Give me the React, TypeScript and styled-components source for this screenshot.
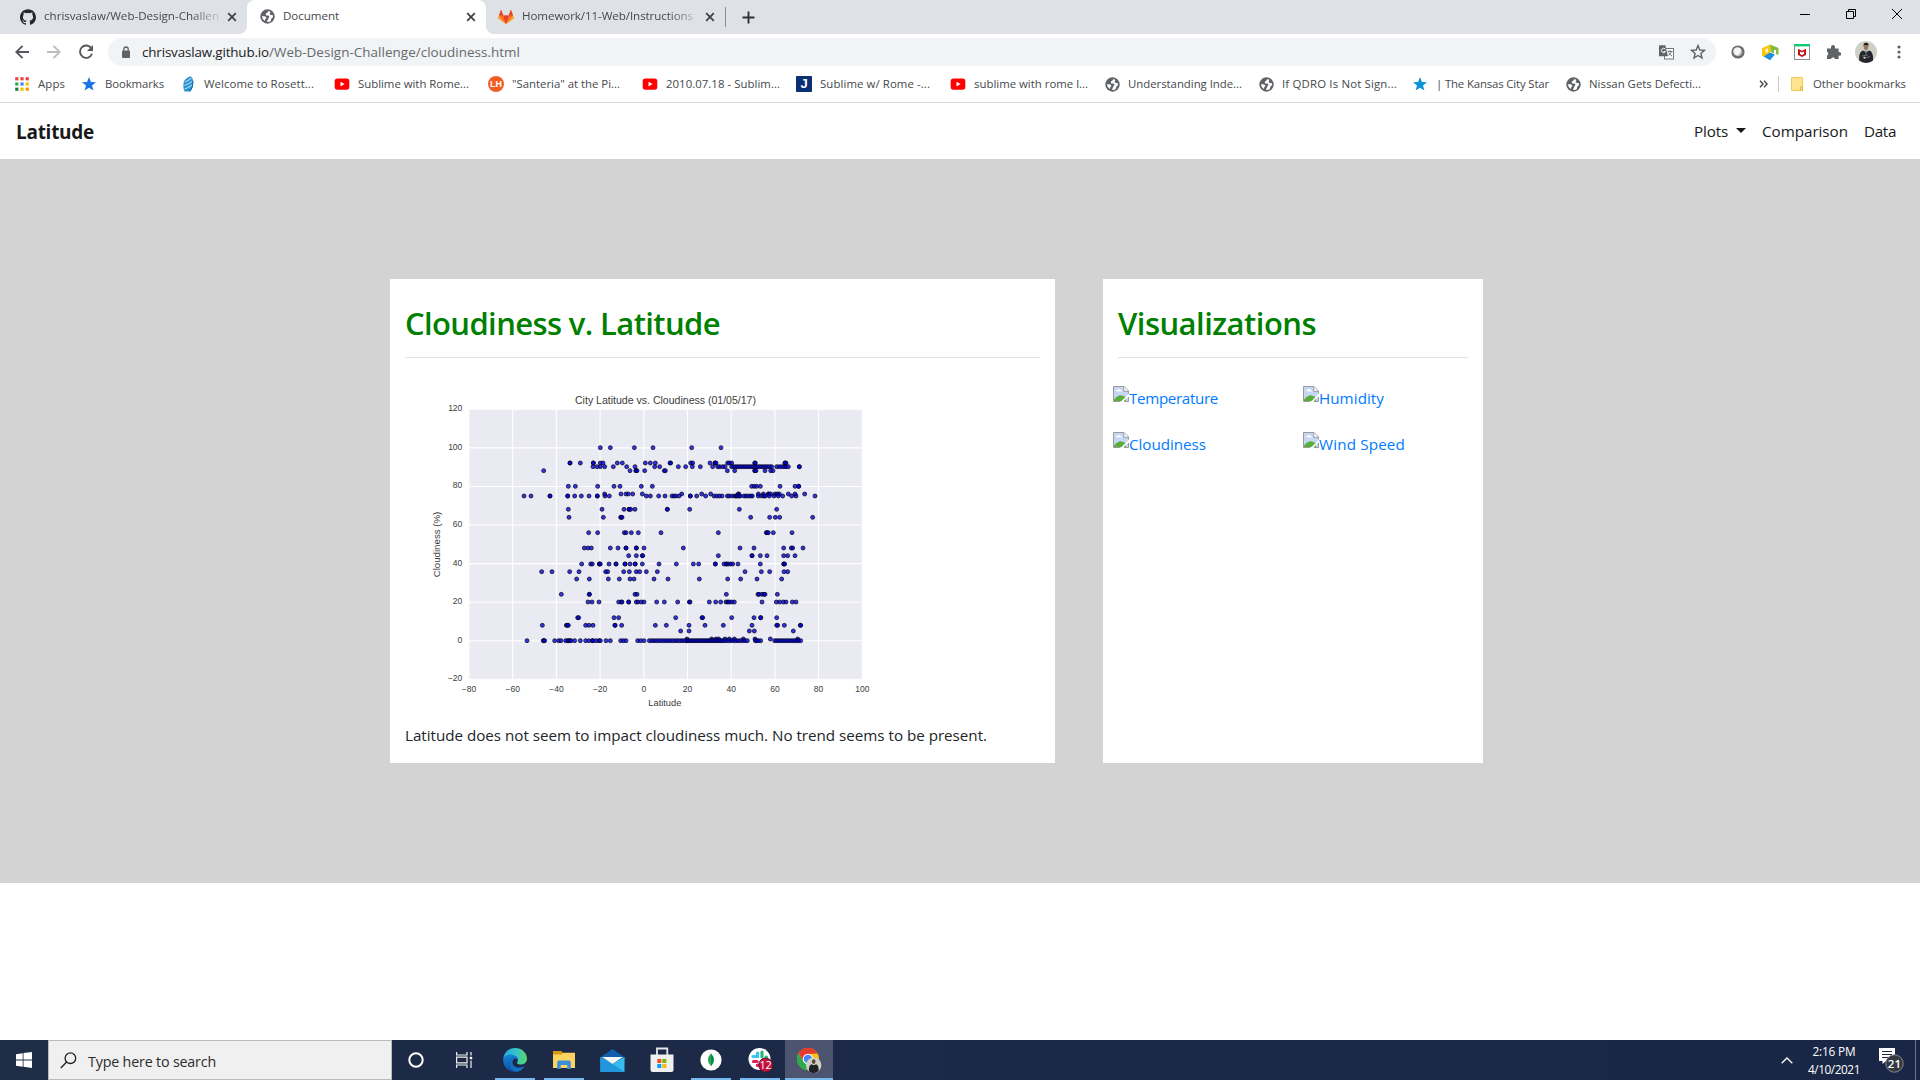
import React, { useLayoutEffect, useRef, useState } from "react";
import styled, { createGlobalStyle } from "styled-components";
import { SiGithub } from "react-icons/si";

const GlobalStyle = createGlobalStyle`
  * { box-sizing: border-box; }
  body { margin: 0; background: #fff; overflow: hidden; font-family: "Open Sans", "Noto Sans", sans-serif; }
  svg { display: block; flex: none; }
`;

/* ---------- fitted text ---------- */
const Label = styled.span<{ $size: number; $color?: string; $weight?: number }>`
  display: inline-block;
  flex: none;
  white-space: pre;
  font-size: ${(p) => p.$size}px;
  line-height: 1.4;
  color: ${(p) => p.$color ?? "inherit"};
  font-weight: ${(p) => p.$weight ?? 400};
`;

type FitProps = { text: string; w: number; size: number; color?: string; weight?: number };

/** Tracks a run of text so that it takes up the given width. */
function Fit({ text, w, size, color, weight }: FitProps) {
  const ref = useRef<HTMLSpanElement>(null);
  const [spacing, setSpacing] = useState(0);
  useLayoutEffect(() => {
    if (ref.current) {
      const natural = ref.current.getBoundingClientRect().width - spacing * text.length;
      setSpacing((w - natural) / text.length);
    }
  }, [text, w, size]);
  return (
    <Label ref={ref} $size={size} $color={color} $weight={weight} style={{ letterSpacing: spacing }}>
      {text}
    </Label>
  );
}

/* ---------- layout ---------- */
const Screen = styled.div`
  width: 1920px;
  height: 1080px;
  display: flex;
  flex-direction: column;
  background: #fff;
`;
const TabStrip = styled.div`
  height: 34px;
  display: flex;
  background: #dee1e6;
`;
const Tab = styled.div<{ $width: number; $active?: boolean; $left: number }>`
  width: ${(p) => p.$width}px;
  height: 34px;
  padding: 0 10px 1px ${(p) => p.$left}px;
  display: flex;
  align-items: center;
  gap: 8px;
  color: #45494d;
  background: ${(p) => (p.$active ? "#fff" : "transparent")};
  border-radius: 8px 8px 0 0;
`;
const TabTitle = styled.div<{ $fade?: boolean }>`
  display: flex;
  flex: 1;
  min-width: 0;
  padding-bottom: 1px;
  mask-image: ${(p) => (p.$fade ? "linear-gradient(90deg,#000 calc(100% - 28px),rgba(0,0,0,.15))" : "none")};
`;
const CurveLeft = styled.div`
  width: 247px;
  background: linear-gradient(#dee1e6, #dee1e6) top / 100% 24px no-repeat, #fff;
`;
const CurveInner = styled.div<{ $side: "left" | "right" }>`
  height: 34px;
  background: #dee1e6;
  border-radius: ${(p) => (p.$side === "left" ? "0 0 8px 0" : "0 0 0 8px")};
`;
const CurveRight = styled.div`
  flex: 1;
  background: linear-gradient(#dee1e6, #dee1e6) top / 100% 24px no-repeat, #fff;
`;
const StripRow = styled.div`
  display: flex;
  height: 34px;
`;
const TabDivider = styled.div`
  width: 1px;
  height: 20px;
  margin-top: 7px;
  background: #8b8f94;
`;
const PlusBox = styled.div`
  width: 44px;
  height: 34px;
  display: grid;
  place-items: center;
`;
const WindowButtons = styled.div`
  margin-left: auto;
  display: flex;
`;
const WindowButton = styled.div`
  width: 46px;
  height: 28px;
  display: grid;
  place-items: center;
`;
const Toolbar = styled.div`
  height: 36px;
  padding: 0 5px 0 6px;
  display: flex;
  align-items: center;
`;
const ToolSlot = styled.div<{ $width?: number }>`
  width: ${(p) => p.$width ?? 32}px;
  height: 28px;
  display: flex;
  align-items: center;
  justify-content: center;
`;
const NavSlots = styled.div`
  display: flex;
  width: 102px;
`;
const AddressBar = styled.div`
  width: 1608px;
  height: 28px;
  margin-right: 6px;
  padding: 0 2px 0 10px;
  display: flex;
  align-items: center;
  border-radius: 14px;
  background: #f1f3f4;
`;
const Url = styled.div`
  display: flex;
  flex: 1;
  padding-left: 8px;
`;
const Bookmarks = styled.div`
  height: 33px;
  padding: 0 14px 4px 14px;
  display: flex;
  align-items: center;
  border-bottom: 1px solid #d5d7da;
  color: #45494d;
`;
const Bookmark = styled.div<{ $width: number }>`
  width: ${(p) => p.$width}px;
  display: flex;
  align-items: center;
  gap: 8px;
`;
const BookmarkIcon = styled.div`
  width: 16px;
  height: 16px;
  display: grid;
  place-items: center;
`;
const BookmarkEnd = styled.div`
  margin-left: auto;
  display: flex;
  align-items: center;
`;
const BookmarkRule = styled.div`
  width: 1px;
  height: 16px;
  margin: 0 10px 0 10px;
  background: #c8cacd;
`;
const JIcon = styled.div`
  width: 16px;
  height: 16px;
  background: #0a2f73;
  color: #fff;
  font: bold 13px/15px "Liberation Sans", sans-serif;
  text-align: center;
  border-radius: 1px;
`;
const LhIcon = styled.div`
  width: 16px;
  height: 16px;
  border-radius: 8px;
  background: #f45d22;
  color: #fff;
  font: bold 9px/16px "Liberation Sans", sans-serif;
  text-align: center;
`;
const SiteNav = styled.nav`
  height: 56px;
  padding: 2px 24px 0 16px;
  display: flex;
  align-items: center;
  color: #17191b;
`;
const SiteLinks = styled.div`
  margin-left: auto;
  display: flex;
  align-items: center;
`;
const Caret = styled.span`
  margin: 0 16px 3px 8px;
  border: 5px solid transparent;
  border-top-color: #17191b;
  border-bottom: 0;
`;
const Spacer = styled.span`
  width: 16px;
`;
const Page = styled.main`
  height: 724px;
  padding: 120px 0 0 390px;
  display: flex;
  align-items: flex-start;
  gap: 48px;
  background: #d3d3d3;
`;
const Card = styled.section<{ $width: number }>`
  width: ${(p) => p.$width}px;
  height: 484px;
  padding: 23px 15px 0;
  background: #fff;
`;
const Heading = styled.h2`
  height: 56px;
  margin: 0;
  line-height: 0;
  border-bottom: 1px solid #e3e3e3;
`;
const ChartBox = styled.div`
  margin: 27px 0 0 15px;
  height: 335px;
`;
const Caption = styled.p`
  margin: 5px 0 0;
  color: #212529;
  line-height: 1;
`;
const ThumbGrid = styled.div`
  margin: 28px 0 0 -5px;
  display: grid;
  grid-template-columns: 190px 190px;
  grid-auto-rows: 46px;
`;
const Thumb = styled.a`
  display: flex;
  color: #007bff;
`;
const ThumbText = styled.div`
  padding-top: 1px;
`;
const Filler = styled.div`
  flex: 1;
`;
const Taskbar = styled.footer`
  height: 40px;
  display: flex;
  background: linear-gradient(90deg, #1f2d47, #1c2947 30%, #1a2645);
`;
const TaskSlot = styled.div<{ $width: number; $run?: boolean; $on?: boolean; $mr?: number }>`
  width: ${(p) => p.$width}px;
  height: 40px;
  margin-right: ${(p) => p.$mr ?? 0}px;
  display: grid;
  place-items: center;
  background: ${(p) => (p.$on ? "#4d5470" : "transparent")};
  box-shadow: ${(p) => (p.$run ? "inset 0 -2px #76b9ed" : "none")};
`;
const SearchBox = styled.div`
  width: 344px;
  height: 40px;
  padding-left: 11px;
  display: flex;
  align-items: center;
  gap: 11px;
  background: #f0f0f0;
  border: 1px solid #b9babc;
  color: #2c2c2c;
`;
const SearchText = styled.div`
  padding-top: 2px;
`;
const Tray = styled.div`
  margin-left: auto;
  display: flex;
`;
const Clock = styled.div`
  width: 68px;
  height: 40px;
  padding-top: 3px;
  display: flex;
  flex-direction: column;
  align-items: center;
  gap: 1px;
  color: #fff;
`;
const ShowDesktop = styled.div`
  width: 5px;
  border-left: 1px solid #6b7389;
`;

/* ---------- icons ---------- */
const Globe = () => (
  <svg width="15" height="15" viewBox="0 0 15 15">
    <circle cx="7.5" cy="7.5" r="7.2" fill="#5f6368" />
    <path d="M8.6 2 L7.4 3.4 Q5.4 4.3 5.8 6 Q6.5 6.8 8.3 6.5 Q9.6 6.8 9.3 8.2 Q8.2 8.8 8.3 10 L6.8 12.6 Q9 13.4 10.8 12 L11.3 9.8 L12.9 8.2 Q13.2 7.2 12.6 6 L10.8 6 L9.6 4.9 L10.4 3 Z M1.9 7.2 L4.4 7.3 Q6.8 7.9 6.3 9.3 L5.3 10 L4.9 12 Q2.3 10.7 1.9 7.2 Z" fill="#fff" />
  </svg>
);
const Close = () => (
  <svg width="10" height="10" viewBox="0 0 10 10">
    <path d="M1.2 1.2 L8.8 8.8 M8.8 1.2 L1.2 8.8" stroke="#3c4043" strokeWidth="1.7" />
  </svg>
);
const GitLab = () => (
  <svg width="16" height="16" viewBox="0 0 16 16">
    <path d="M8 15 L0.2 9.2 L3.1 0.8 L5.3 6.4 H10.7 L12.9 0.8 L15.8 9.2 Z" fill="#fc6d26" />
    <path d="M8 15 L5.3 6.4 H10.7 Z M.9 6.4 L3.1 .8 L5.3 6.4 Z M15.1 6.4 L12.9 .8 L10.7 6.4 Z" fill="#e24329" />
    <path d="M8 15 L.2 9.2 L1 6.4 Z M8 15 L15.8 9.2 L15 6.4 Z" fill="#fca326" />
  </svg>
);
const Star = ({ fill }: { fill: string }) => (
  <svg width="16" height="16" viewBox="0 0 16 16">
    <path d="M8 1 L9.9 5.9 L15 6.2 L11 9.5 L12.4 14.6 L8 11.7 L3.6 14.6 L5 9.5 L1 6.2 L6.1 5.9 Z" fill={fill} />
  </svg>
);
const YouTube = () => (
  <svg width="16" height="16" viewBox="0 0 16 16">
    <rect x=".7" y="2.5" width="14.6" height="11.2" rx="2.6" fill="#f00" />
    <path d="M6.5 5.7 L10.6 8.1 L6.5 10.5 Z" fill="#fff" />
  </svg>
);
const AppsIcon = () => (
  <svg width="14" height="14" viewBox="0 0 14 14">
    {["#ea4335", "#ea4335", "#ea4335", "#34a853", "#4285f4", "#fbbc04", "#188038", "#fbbc04", "#f29900"].map((c, i) => (
      <rect key={i} x={(i % 3) * 5.2 + 0.2} y={Math.floor(i / 3) * 5.2 + 0.2} width="3.2" height="3.2" fill={c} />
    ))}
  </svg>
);
const Rosetta = () => (
  <svg width="16" height="16" viewBox="0 0 16 16">
    <path d="M4 5 Q8 0 11 .5 Q14 3 13 9 Q12.5 13 10 15.5 H4.5 Q2.5 11 4 5 Z" fill="#2b91cd" />
    <path d="M5 6 Q9 4 11.5 2 M4.4 9.5 Q9 8 12 5.5 M4.6 13 Q9 11.5 12 9" stroke="#9bd4f0" strokeWidth="1.2" fill="none" />
    <path d="M10 15.5 Q13 12 13 5" stroke="#1769a8" fill="none" />
  </svg>
);
const Avatar = ({ size }: { size: number }) => (
  <svg width={size} height={size} viewBox="0 0 22 22">
    <circle cx="11" cy="11" r="11" fill="#cfd0c4" />
    <path d="M4.2 19.5 Q3.5 11 8 9.5 L11 11 L14.5 9.5 Q18.5 11 18 19.4 A11 11 0 0 1 4.2 19.5 Z" fill="#24262b" />
    <ellipse cx="11" cy="5.8" rx="2.3" ry="3.2" fill="#9a7460" />
    <path d="M8.4 5 Q8.6 1.6 11 1.8 Q13.6 1.6 13.6 5 L12.6 3.9 H9.4 Z" fill="#1c1a1a" />
    <path d="M9.8 9.5 H12.2 L11 14 Z" fill="#7d97a0" />
    <path d="M7 15 L13 14 M10 17 L15 15.5" stroke="#70716e" />
    <circle cx="9.4" cy="16.7" r="1" fill="#ddd" />
  </svg>
);
const BrokenImage = () => (
  <svg width="16" height="16" viewBox="0 0 16 16">
    <path d="M.5 .5 H11 L15.5 5 V15.5 H.5 Z" fill="#c6d7f4" />
    <path d="M3 5.3 Q3 3.6 4.7 3.8 Q6.5 2 7.6 4 Q9 4.1 8.8 5.5 Z" fill="#fff" />
    <path d="M1 15 V13.4 Q5 9.2 8 9.3 L13 11 V15 Z" fill="#5aad3b" />
    <path d="M7.6 16 L16 7.6 V9.8 L10 16 Z" fill="#fff" />
    <path d="M15.5 11 V15.5 H11 M7.2 15.5 H.5 V.5 H11 L15.5 5 V7.6" fill="none" stroke="#9a9a9a" />
    <path d="M10.8 .8 V5.3 H15.3" fill="#fff" stroke="#9a9a9a" />
  </svg>
);
const Edge = () => (
  <svg width="24" height="24" viewBox="0 0 24 24">
    <defs>
      <linearGradient id="edgeTop" x1="0" x2="1">
        <stop offset="0" stopColor="#2aa7e2" />
        <stop offset=".55" stopColor="#35c4c8" />
        <stop offset="1" stopColor="#5cd864" />
      </linearGradient>
      <linearGradient id="edgeLow" x1="0" y1="0" x2=".3" y2="1">
        <stop offset="0" stopColor="#1688d8" />
        <stop offset="1" stopColor="#0c50a4" />
      </linearGradient>
    </defs>
    <path d="M.3 11 C1 4 6 0 12 0 C19 0 24 5 24 10.5 C24 14.5 21 16.5 17.5 16.5 C14 16.5 13.5 15 14.5 13.7 C16 11 13 8 9 8 C5 8 1.5 9.2 .3 11 Z" fill="url(#edgeTop)" />
    <path d="M.2 12.5 C0 8.5 4 6.2 8 6.6 C12.5 7 15 9.5 15 11.5 C13 9.6 10 11 9.4 13.4 C8.8 17.5 13.5 21.5 21.5 18.6 C19.4 22 16 24 12 24 C5.4 24 .3 19 .2 12.5 Z" fill="url(#edgeLow)" />
    <path d="M9.6 12.6 C7.5 17 12 22.6 21.5 18.6 C19.5 21.8 16.6 23.5 13.5 23.8 C6.5 22.5 5.5 15.5 9.6 12.6 Z" fill="#1a6fc0" />
  </svg>
);
const Explorer = () => (
  <svg width="22" height="20" viewBox="0 0 22 20">
    <path d="M0 1 H8.5 L10 3 H22 V17 H0 Z" fill="#d99a0b" />
    <path d="M0 4.5 H8.5 L10 2.8 H22 V18 H0 Z" fill="#fcd462" />
    <path d="M4.2 19 V12.5 Q4.2 10.6 6 10.6 H16 Q17.8 10.6 17.8 12.5 V19 H14.2 V15 H7.8 V19 Z" fill="#3d8fd8" />
  </svg>
);
const Mail = () => (
  <svg width="25" height="25" viewBox="0 0 25 25">
    <path d="M.5 9.2 L12.5 1 L24.5 9.2 V15 H.5 Z" fill="#0f5fae" />
    <path d="M.5 9 L12.5 16 L24.5 9 V24 H.5 Z" fill="#35bdf0" />
    <path d="M.5 9 L12.5 16 L24.5 24 H.5 Z" fill="#2196dc" />
    <path d="M2 9 H23 L12.5 16 Z" fill="#f3f5f7" />
  </svg>
);
const Store = () => (
  <svg width="24" height="26" viewBox="0 0 24 26">
    <path d="M7 8 V1.5 H17.3 V8" fill="none" stroke="#e8e8e8" strokeWidth="1.8" />
    <path d="M.5 7.5 H23.5 V23 Q23.5 25 21.5 25 H2.5 Q.5 25 .5 23 Z" fill="#f0f0f0" />
    <path d="M7.3 12 H11.3 V16 H7.3 Z" fill="#f04f23" />
    <path d="M12.3 12 H16.4 V16 H12.3 Z" fill="#7eb900" />
    <path d="M7.3 17 H11.3 V21 H7.3 Z" fill="#00a3ee" />
    <path d="M12.3 17 H16.4 V21 H12.3 Z" fill="#fdb813" />
  </svg>
);
const Mongo = () => (
  <svg width="22" height="22" viewBox="0 0 22 22">
    <circle cx="11" cy="11" r="10.6" fill="#fff" />
    <path d="M11 4.3 Q8 7.5 8 11 Q8 14.5 10.8 17 Z" fill="#13aa52" />
    <path d="M11 4.3 Q14 7.5 14 11 Q14 14.5 11.2 17 L10.8 17 Z" fill="#0f8a43" />
  </svg>
);
const Slack = () => (
  <svg width="26" height="26" viewBox="0 0 26 26">
    <circle cx="12.5" cy="12" r="11" fill="#fff" />
    <g strokeWidth="3.2" strokeLinecap="round">
      <path d="M10.5 6 V9.5 H6" stroke="#36c5f0" fill="none" />
      <path d="M15 5 V10" stroke="#2eb67d" />
      <path d="M19 10 H19.5" stroke="#2eb67d" />
      <path d="M6.5 14.5 H10 M10.5 18 V18.5" stroke="#e01e5a" />
      <path d="M15 14.5 H18.5" stroke="#ecb22e" />
    </g>
    <circle cx="18.6" cy="18" r="6.9" fill="#c3133f" stroke="#6d1331" />
    <text x="18.6" y="21.8" fontSize="10.8" fill="#fff" textAnchor="middle">12</text>
  </svg>
);
const Chrome = () => (
  <svg width="26" height="26" viewBox="0 0 26 26">
    <circle cx="12" cy="12" r="11" fill="#fbc116" />
    <path d="M2.4 6.5 A11 11 0 0 1 21.6 6.5 L12 7 L7.5 14.5 Z" fill="#e33b2e" />
    <path d="M2.4 6.5 A11 11 0 0 0 11 23 L16 14.5 L7.5 14.5 Z" fill="#2da94f" />
    <circle cx="12" cy="12" r="5.3" fill="#fff" />
    <circle cx="12" cy="12" r="4.2" fill="#4285f4" />
    <g transform="translate(10 10.5) scale(.7)">
      <circle cx="11" cy="11" r="11" fill="#cfd0c4" />
      <path d="M4.2 19.5 Q3.5 11 8 9.5 L11 11 L14.5 9.5 Q18.5 11 18 19.4 A11 11 0 0 1 4.2 19.5 Z" fill="#202226" />
      <ellipse cx="11" cy="5.8" rx="2.6" ry="3.4" fill="#5a4438" />
    </g>
  </svg>
);

/* ---------- scatter plot ---------- */
const range = (from: number, to: number, step: number) => {
  const out: number[] = [];
  for (let v = from; v <= to; v += step) out.push(v);
  return out;
};
const points: Array<[number, number[]]> = [
  [188, [541, 571, 643, 699, 815, 903]],
  [234, [450, 450, 481, 520, 520, 541, 549, 592, 607, 676, 691, 706, 750, 752, 812, 818, 870, 885, 885, 888, 923, 928, 935, 1004, 1006, 1095, 1095, 1098]],
  [245, [519, 531, 541, 554, 580, 620, 645, 704, 719, 775, 797, 817, 841, 878, 893, 899, 908, 915, ...range(935, 1055, 6), 1070, 1078, 1085, 1092, 1098, 1105, 1138, 1138]],
  [257, [371, 630, 648, 648, 651, 674, 733, 736, 922, 944, 1004, 1005, 1008, 1035, 1052, 1059]],
  [304, [445, 466, 533, 582, 600, 664, 697, 995, 1003, 1010, 1021, 1080, 1125, 1136, 1136]],
  [327, [554, 603, 618, 625, 638, 667, 785, 845, 872, 955, 956, 1015, 1030, 1045, 1046, 1052, 1065, 1072, 1078, 1105, 1125, 1154]],
  [333, [312, 333, 390, 390, 443, 443, 464, 484, 507, 532, 532, 555, 568, 679, 691, 716, 735, 756, 762, 768, 777, 811, 811, 830, 857, 882, 890, 898, 906, 922, 928, 937, 945, 948, 952, 957, 961, 972, 978, 985, 992, 997, 1015, 1025, 1032, 1036, 1048, 1062, 1075, 1088, 1115, 1128, 1185]],
  [373, [445, 546, 612, 627, 627, 632, 645, 742, 742, 809, 958, 1070]],
  [397, [447, 550, 602, 604, 606, 992, 1049, 1066, 1079, 1178]],
  [443, [506, 533, 613, 618, 634, 655, 723, 895, 1039, 1041, 1045, 1060, 1116]],
  [489, [493, 504, 514, 571, 594, 618, 618, 649, 649, 672, 790, 960, 1002, 1091, 1114, 1118, 1149]],
  [512, [626, 649, 667, 668, 895, 996, 996, 1021, 1041, 1091, 1103, 1125]],
  [537, [485, 512, 517, 538, 538, 541, 567, 588, 588, 615, 615, 630, 645, 646, 667, 717, 769, 820, 836, 886, 886, 912, 919, 919, 925, 932, 938, 954, 1021, 1091, 1092, 1094]],
  [560, [365, 396, 449, 477, 557, 563, 611, 628, 649, 659, 679, 712, 975, 1024, 1049, 1092, 1103]],
  [582, [470, 508, 565, 598, 630, 642, 702, 744, 838, 923, 962, 1011, 1085]],
  [628, [424, 508, 508, 645, 651, 919, 1014, 1017, 1026, 1032, 1035, 1072]],
  [651, [504, 516, 537, 596, 604, 606, 626, 626, 649, 654, 664, 672, 710, 733, 773, 808, 810, 868, 887, 902, 918, 923, 928, 935, 943, 1026, 1069, 1079, 1090, 1098, 1117, 1128]],
  [698, [473, 476, 582, 596, 767, 846, 848, 935, 1002, 1022, 1022, 1070]],
  [721, [367, 439, 442, 445, 497, 507, 519, 585, 585, 605, 706, 739, 807, 855, 910, 996, 1070, 1073, 1093, 1141, 1142]],
  [738, [782, 807, 988, 1003, 1120]],
  [762, [801, 875, 888, 896, 915, 928, 943, 970, 1005, 1051, 1133]],
  [767, [321, 370, 371, 374, 404, 416, 423, 437, 443, 446, 450, 453, 464, 481, 497, 507, 517, 519, 528, 537, 541, 558, 571, 602, 610, 618, 653, 662, 672, ...range(688, 800, 7), ...range(802, 908, 5), ...range(912, 986, 7), 1006, 1010, 1015, 1022, ...range(1064, 1142, 6)]],
];
const xTicks = [-80, -60, -40, -20, 0, 20, 40, 60, 80, 100];
const yTicks = [120, 100, 80, 60, 40, 20, 0, -20];
const minus = (n: number) => String(n).replace("-", "\u2212");

const Chart = () => (
  <svg width="460" height="335" viewBox="0 0 1380 1005" fontFamily="Liberation Sans, sans-serif" fill="#3c3c3c">
    <rect x="147" y="73" width="1180" height="810" fill="#eaeaf2" />
    {xTicks.map((t, i) => (
      <g key={t}>
        <path d={`M${147 + i * 131.1} 73 V883`} stroke="#fff" strokeWidth="3.2" />
        <text x={147 + i * 131.1} y="922" fontSize="25.5" textAnchor="middle">{minus(t)}</text>
      </g>
    ))}
    {yTicks.map((t, i) => (
      <g key={t}>
        <path d={`M147 ${73 + i * 115.7} H1327`} stroke="#fff" strokeWidth="3.2" />
        <text x="127" y={79 + i * 115.7} fontSize="25.5" textAnchor="end">{minus(t)}</text>
      </g>
    ))}
    {points.map(([y, xs]) =>
      xs.map((x, i) => (
        <circle key={`${y}-${i}`} cx={x} cy={y} r="6" fill="#0000dc" fillOpacity=".78" stroke="#000018" strokeOpacity=".8" strokeWidth="2.6" />
      ))
    )}
    <text x="465" y="58" fontSize="30" textLength="543" lengthAdjust="spacingAndGlyphs">City Latitude vs. Cloudiness (01/05/17)</text>
    <text x="685" y="963" fontSize="28" textLength="99" lengthAdjust="spacingAndGlyphs">Latitude</text>
    <text transform="translate(61 577) rotate(-90)" fontSize="28" textLength="197" lengthAdjust="spacingAndGlyphs">Cloudiness (%)</text>
  </svg>
);

const bookmarks: Array<{ icon: React.ReactNode; text: string; w: number; slot: number }> = [
  { icon: <AppsIcon />, text: "Apps", w: 27, slot: 67 },
  { icon: <Star fill="#1a73e8" />, text: "Bookmarks", w: 59, slot: 99 },
  { icon: <Rosetta />, text: "Welcome to Rosett...", w: 110, slot: 154 },
  { icon: <YouTube />, text: "Sublime with Rome...", w: 111, slot: 154 },
  { icon: <LhIcon>LH</LhIcon>, text: '"Santeria" at the Pi...', w: 108, slot: 154 },
  { icon: <YouTube />, text: "2010.07.18 - Sublim...", w: 114, slot: 154 },
  { icon: <JIcon>J</JIcon>, text: "Sublime w/ Rome -...", w: 110, slot: 154 },
  { icon: <YouTube />, text: "sublime with rome l...", w: 114, slot: 154 },
  { icon: <Globe />, text: "Understanding Inde...", w: 114, slot: 154 },
  { icon: <Globe />, text: "If QDRO Is Not Sign...", w: 115, slot: 154 },
  { icon: <Star fill="#0b94d8" />, text: "| The Kansas City Star", w: 113, slot: 153 },
  { icon: <Globe />, text: "Nissan Gets Defecti...", w: 112, slot: 150 },
];
const thumbs: Array<[string, number]> = [["Temperature", 89], ["Humidity", 65], ["Cloudiness", 77], ["Wind Speed", 86]];

export default function App() {
  return (
    <Screen>
      <GlobalStyle />
      <TabStrip>
        <CurveLeft>
          <CurveInner $side="left">
            <Tab $width={247} $left={20}>
              <SiGithub size={16} color="#24292e" />
              <TabTitle $fade><Fit text="chrisvaslaw/Web-Design-Challen" w={175} size={11.6} /></TabTitle>
              <Close />
            </Tab>
          </CurveInner>
        </CurveLeft>
        <Tab $width={239} $left={13} $active>
          <Globe />
          <TabTitle><Fit text="Document" w={56} size={11.6} /></TabTitle>
          <Close />
        </Tab>
        <CurveRight>
          <CurveInner $side="right">
            <StripRow>
              <Tab $width={239} $left={12}>
                <GitLab />
                <TabTitle $fade><Fit text="Homework/11-Web/Instructions" w={171} size={11.6} /></TabTitle>
                <Close />
              </Tab>
              <TabDivider />
              <PlusBox>
                <svg width="13" height="13" viewBox="0 0 13 13"><path d="M6.5 .5 V12.5 M.5 6.5 H12.5" stroke="#303336" strokeWidth="1.9" /></svg>
              </PlusBox>
              <WindowButtons>
                <WindowButton><svg width="10" height="10"><path d="M0 5.5 H10" stroke="#000" /></svg></WindowButton>
                <WindowButton><svg width="10" height="10"><path d="M.5 2.5 H7.5 V9.5 H.5 Z M2.5 2.5 V.5 H9.5 V7.5 H7.5" fill="none" stroke="#000" /></svg></WindowButton>
                <WindowButton><svg width="10" height="10"><path d="M0 0 L10 10 M10 0 L0 10" stroke="#000" /></svg></WindowButton>
              </WindowButtons>
            </StripRow>
          </CurveInner>
        </CurveRight>
      </TabStrip>

      <Toolbar>
        <NavSlots>
          <ToolSlot><svg width="14" height="14"><path d="M14 7 H1.5 M7.5 .8 L1.3 7 L7.5 13.2" fill="none" stroke="#54585d" strokeWidth="1.9" /></svg></ToolSlot>
          <ToolSlot><svg width="14" height="14"><path d="M0 7 H12.5 M6.5 .8 L12.7 7 L6.5 13.2" fill="none" stroke="#bbbdc0" strokeWidth="1.9" /></svg></ToolSlot>
          <ToolSlot><svg width="16" height="16"><path d="M13.3 4.2 A6.2 6.2 0 1 0 14 9.8" fill="none" stroke="#54585d" strokeWidth="1.9" /><path d="M15 1 V7 H9 Z" fill="#54585d" /></svg></ToolSlot>
        </NavSlots>
        <AddressBar>
          <ToolSlot $width={16}><svg width="10" height="13"><rect x="1" y="4.5" width="8" height="7.5" rx="1" fill="#5f6368" /><path d="M2.8 5 V3.2 A2.2 2.2 0 0 1 7.2 3.2 V5" fill="none" stroke="#5f6368" strokeWidth="1.3" /></svg></ToolSlot>
          <Url>
            <Fit text="chrisvaslaw.github.io" w={127} size={13.4} color="#202124" />
            <Fit text="/Web-Design-Challenge/cloudiness.html" w={251} size={13.4} color="#65696e" />
          </Url>
          <ToolSlot>
            <svg width="15" height="15">
              <rect x="5.5" y="3.5" width="9" height="10.5" fill="#fff" stroke="#74777b" />
              <path d="M0 1 Q0 .3 .8 .3 H6.3 L9 11.3 H1 Q0 11.3 0 10.4 Z" fill="#5f6368" />
              <path d="M6.4 4.2 A2.2 2.2 0 1 0 6.6 6.5 H4.6" stroke="#fff" fill="none" />
              <path d="M8.5 6.5 H13.5 M11 5.2 V6.5 M12.6 6.5 Q11.7 9 9.4 10.5 M9.7 7.5 Q11 10 13 11" stroke="#74777b" fill="none" />
            </svg>
          </ToolSlot>
          <ToolSlot><svg width="16" height="16"><path d="M8 1.6 L9.8 6 L14.5 6.4 L10.9 9.4 L12 14 L8 11.5 L4 14 L5.1 9.4 L1.5 6.4 L6.2 6 Z" fill="none" stroke="#5f6368" strokeWidth="1.4" /></svg></ToolSlot>
        </AddressBar>
        <ToolSlot><svg width="14" height="14"><circle cx="7" cy="7" r="6.6" fill="#6a6d70" /><circle cx="6.5" cy="6.5" r="4.2" fill="#f4f4f4" /><path d="M8 10.5 Q10.8 9 10.5 6" stroke="#b5b5b5" strokeWidth="1.5" fill="none" /></svg></ToolSlot>
        <ToolSlot>
          <svg width="17" height="17"><path d="M0 4.2 L8 .5 L8.5 8 L5.5 11.8 L0 12.5 Z" fill="#fbc70d" /><path d="M8 .5 L16.5 4 V11 L12.6 9.4 L8.6 8 Z" fill="#84bd3a" /><path d="M1.6 12.4 L8 8.5 L13 10.5 L8 16.3 Z" fill="#1f8fd6" /><path d="M3.5 5 L6 4.5 V8 L3.5 9 Z" fill="#fff6c8" /><path d="M12 6 H14 V11 L12 10 Z" fill="#fff" /></svg>
        </ToolSlot>
        <ToolSlot><svg width="16" height="16"><rect x=".5" y=".5" width="15" height="15" fill="#fff" stroke="#8a8d90" /><rect width="16" height="2.4" fill="#0fc873" /><path d="M4 4.8 L8 6.8 L12 4.8 V11 L8 13 L4 11 Z" fill="#c01818" /><path d="M6 7.6 L8 8.6 L10 7.6 V10 L8 11 L6 10 Z" fill="#fff" /></svg></ToolSlot>
        <ToolSlot><svg width="16" height="16" viewBox="0 0 16 16"><path d="M1 4.4 H5 V3 A2 2 0 0 1 9 3 V4.4 H12.6 V8 H13.3 A1.9 1.9 0 0 1 13.3 11.8 H12.6 V15 H9 A2.1 2.1 0 0 0 5 15 H1 V11.5 A2 2 0 0 0 1 7.8 Z" fill="#5f6368" /></svg></ToolSlot>
        <ToolSlot><Avatar size={22} /></ToolSlot>
        <ToolSlot $width={33}><svg width="4" height="14" fill="#5f6368"><circle cx="2" cy="2" r="1.6" /><circle cx="2" cy="7" r="1.6" /><circle cx="2" cy="12" r="1.6" /></svg></ToolSlot>
      </Toolbar>

      <Bookmarks>
        {bookmarks.map((b) => (
          <Bookmark key={b.text} $width={b.slot}>
            <BookmarkIcon>{b.icon}</BookmarkIcon>
            <Fit text={b.text} w={b.w} size={11.4} />
          </Bookmark>
        ))}
        <BookmarkEnd>
          <svg width="9" height="8"><path d="M1 .8 L4 4 L1 7.2 M5 .8 L8 4 L5 7.2" fill="none" stroke="#4b4f54" strokeWidth="1.5" /></svg>
          <BookmarkRule />
          <Bookmark $width={117}>
            <BookmarkIcon><svg width="12" height="14"><path d="M.5 .5 H11.5 V13.5 H.5 Z" fill="#ffe58f" stroke="#eccb5c" /><path d="M9.5 13.5 V9.8 H11.6 V13.5 Z" fill="#ffe58f" stroke="#e3b93f" /></svg></BookmarkIcon>
            <Fit text="Other bookmarks" w={93} size={11.4} />
          </Bookmark>
        </BookmarkEnd>
      </Bookmarks>

      <SiteNav>
        <Fit text="Latitude" w={78} size={19} weight={700} color="#17191b" />
        <SiteLinks>
          <Fit text="Plots" w={34} size={15.2} />
          <Caret />
          <Fit text="Comparison" w={86} size={15.2} />
          <Spacer />
          <Fit text="Data" w={32} size={15.2} />
        </SiteLinks>
      </SiteNav>

      <Page>
        <Card $width={665}>
          <Heading><Fit text="Cloudiness v. Latitude" w={315} size={31} weight={600} color="green" /></Heading>
          <ChartBox><Chart /></ChartBox>
          <Caption><Fit text="Latitude does not seem to impact cloudiness much. No trend seems to be present." w={582} size={15.2} /></Caption>
        </Card>
        <Card $width={380}>
          <Heading><Fit text="Visualizations" w={198} size={31} weight={600} color="green" /></Heading>
          <ThumbGrid>
            {thumbs.map(([name, w]) => (
              <Thumb key={name}>
                <BrokenImage />
                <ThumbText><Fit text={name} w={w} size={15.2} /></ThumbText>
              </Thumb>
            ))}
          </ThumbGrid>
        </Card>
      </Page>
      <Filler />

      <Taskbar>
        <TaskSlot $width={48}>
          <svg width="16" height="16" fill="#fff"><path d="M0 2.2 L6.7 1.3 V7.5 H0 Z M7.5 1.1 L16 0 V7.5 H7.5 Z M0 8.4 H6.7 V14.7 L0 13.8 Z M7.5 8.4 H16 V16 L7.5 14.8 Z" /></svg>
        </TaskSlot>
        <SearchBox>
          <svg width="17" height="17"><circle cx="10.4" cy="6.2" r="5.3" fill="none" stroke="#222" strokeWidth="1.3" /><path d="M6.6 10 L.8 16" stroke="#222" strokeWidth="1.4" /></svg>
          <SearchText><Fit text="Type here to search" w={128} size={14.3} /></SearchText>
        </SearchBox>
        <TaskSlot $width={48}><svg width="16" height="16"><circle cx="8" cy="8" r="6.7" fill="none" stroke="#fff" strokeWidth="2" /></svg></TaskSlot>
        <TaskSlot $width={48} $mr={7}>
          <svg width="17" height="16" fill="none" stroke="#f2f2f2" strokeWidth="1.2"><path d="M.6 0 V3 H11 V0 M.6 16 V13 H11 V16 M.6 5.2 H11 V10.8 H.6 Z M15 0 V3.6 M15 8.5 V16" /><rect x="13.8" y="4.8" width="2.4" height="2.4" fill="#fff" stroke="none" /></svg>
        </TaskSlot>
        <TaskSlot $width={40} $run $mr={9}><Edge /></TaskSlot>
        <TaskSlot $width={40} $run $mr={8}><Explorer /></TaskSlot>
        <TaskSlot $width={41} $mr={8}><Mail /></TaskSlot>
        <TaskSlot $width={41} $mr={9}><Store /></TaskSlot>
        <TaskSlot $width={40} $run $mr={9}><Mongo /></TaskSlot>
        <TaskSlot $width={40} $run $mr={5}><Slack /></TaskSlot>
        <TaskSlot $width={48} $run $on><Chrome /></TaskSlot>
        <Tray>
          <TaskSlot $width={26}><svg width="12" height="7"><path d="M.7 6.3 L6 1 L11.3 6.3" fill="none" stroke="#fff" strokeWidth="1.3" /></svg></TaskSlot>
          <Clock>
            <Fit text="2:16 PM" w={43} size={11.8} />
            <Fit text="4/10/2021" w={52} size={11.8} />
          </Clock>
          <TaskSlot $width={47}>
            <svg width="27" height="27" viewBox="0 0 27 27">
              <path d="M1 1 H17 V14 H8 L4.5 17 V14 H1 Z" fill="#fff" />
              <path d="M4 4.5 H14 M4 7.5 H14 M4 10.5 H10" stroke="#1c2947" strokeWidth="1.2" />
              <circle cx="16.5" cy="16.5" r="8.7" fill="#34383f" stroke="#84888f" />
              <text x="16.4" y="20.6" fontSize="11.5" fontWeight="600" fill="#fff" textAnchor="middle">21</text>
            </svg>
          </TaskSlot>
          <ShowDesktop />
        </Tray>
      </Taskbar>
    </Screen>
  );
}
